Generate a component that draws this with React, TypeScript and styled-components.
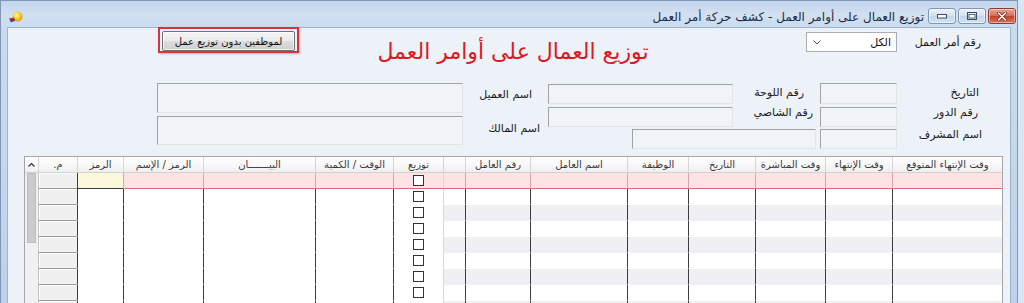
import React from "react";
import styled, { createGlobalStyle } from "styled-components";

const FONT = `"DejaVu Sans", "Liberation Sans", sans-serif`;

const GlobalStyle = createGlobalStyle`
  html, body { margin: 0; padding: 0; }
  body { background: #d9e6f4; font-family: ${FONT}; }
  * { box-sizing: border-box; }
`;

type ColKind = "rowhead" | "code" | "text" | "check" | "banded";

interface Column {
  title: string;
  width: number;
  kind: ColKind;
  faint?: boolean;
}

const COLUMNS: Column[] = [
  { title: "م.", width: 39, kind: "rowhead" },
  { title: "الرمز", width: 46, kind: "code" },
  { title: "الرمز / الإسم", width: 80, kind: "text" },
  { title: "البيـــــــان", width: 112, kind: "text" },
  { title: "الوقت / الكمية", width: 78, kind: "text" },
  { title: "توزيع", width: 50, kind: "check" },
  { title: "", width: 22, kind: "banded", faint: true },
  { title: "رقم العامل", width: 65, kind: "banded" },
  { title: "اسم العامل", width: 97, kind: "banded" },
  { title: "الوظيفة", width: 61, kind: "banded" },
  { title: "التاريخ", width: 67, kind: "banded" },
  { title: "وقت المباشرة", width: 70, kind: "banded" },
  { title: "وقت الإنتهاء", width: 67, kind: "banded" },
  { title: "وقت الإنتهاء المتوقع", width: 110, kind: "banded" },
];

const ROW_COUNT = 9;

const Screen = styled.div`
  width: 1024px;
  height: 303px;
  overflow: hidden;
  background: #d9e6f4;
`;

const Window = styled.div`
  width: 1018px;
  height: 303px;
  display: flex;
  flex-direction: column;
  border: 1px solid #8098b6;
  border-bottom: none;
  background: linear-gradient(180deg, #c3d6ec 0px, #d2e0f1 14px, #cadbee 26px, #bdd2ea 100%);
`;

const TitleBar = styled.div`
  height: 26px;
  flex-shrink: 0;
  display: flex;
  align-items: flex-start;
  padding: 0 1px 0 7px;
`;

const AppIcon = styled.svg`
  margin-top: 10px;
  flex-shrink: 0;
`;

const Caption = styled.div`
  flex: 1;
  direction: rtl;
  text-align: right;
  padding-top: 8px;
  font-size: 12px;
  line-height: 16px;
  color: #1c2d42;
  white-space: nowrap;
`;

const CaptionButtons = styled.div`
  display: flex;
  gap: 2px;
  margin: 7px 0 0 4px;
`;

const CaptionButton = styled.div<{ $close?: boolean }>`
  width: 28px;
  height: 16px;
  display: flex;
  align-items: center;
  justify-content: center;
  border: 1px solid ${(p) => (p.$close ? "#8a3a2e" : "#7f95b3")};
  border-radius: 3px;
  background: ${(p) =>
    p.$close
      ? "linear-gradient(180deg, #e8a797 0%, #d66a55 50%, #c3412b 51%, #d7735c 100%)"
      : "linear-gradient(180deg, #eef3f9 0%, #d3e0ef 50%, #c2d4ea 51%, #d6e3f1 100%)"};
  box-shadow: inset 0 0 0 1px rgba(255, 255, 255, 0.45);
`;

const Client = styled.div`
  flex: 1;
  min-height: 0;
  margin: 0 6px;
  display: flex;
  flex-direction: column;
  background: #edf2f8;
  border: 1px solid #9db3cd;
  border-bottom: none;
`;

const FormArea = styled.div`
  flex-shrink: 0;
  display: grid;
  grid-template-columns: 149px 306px 85px 84px 101px 73px 10px 4px 77px 113px;
  grid-template-rows: 28px 27px 21px 2px 7px 3px 11px 2px 16px 4px 7px;
`;

const HighlightFrame = styled.div`
  grid-area: 1 / 2 / 2 / 3;
  justify-self: start;
  align-self: start;
  margin: -1px 0 0 1px;
  width: 141px;
  height: 26px;
  padding: 2px 2px 0 2px;
  border: 2px solid #d8323f;
  box-shadow: 1px 1px 2px rgba(0, 0, 0, 0.25);
`;

const PushButton = styled.div`
  height: 20px;
  display: flex;
  align-items: center;
  justify-content: center;
  direction: rtl;
  font-size: 10px;
  color: #111;
  border: 1px solid #707070;
  border-radius: 2px;
  background: linear-gradient(180deg, #f4f4f4 0%, #ebebeb 50%, #dddddd 51%, #cfcfcf 100%);
  box-shadow: inset 0 0 0 1px rgba(255, 255, 255, 0.7);
`;

const Heading = styled.h1`
  grid-area: 1 / 1 / 3 / 11;
  justify-self: center;
  align-self: start;
  margin: 9px 0 0;
  padding-left: 8px;
  direction: rtl;
  font-family: ${FONT};
  font-weight: normal;
  font-size: 22px;
  line-height: 30px;
  color: #e0161f;
  white-space: nowrap;
`;

const Combo = styled.div`
  grid-area: 1 / 7 / 2 / 10;
  align-self: start;
  margin-top: 4px;
  height: 20px;
  display: flex;
  align-items: center;
  justify-content: space-between;
  direction: rtl;
  padding: 0 5px 0 6px;
  background: #fff;
  border: 1px solid #abadb3;
  font-size: 11px;
  color: #111;
`;

const FieldLabel = styled.span<{ $area: string; $top: number; $right: number }>`
  grid-area: ${(p) => p.$area};
  align-self: start;
  justify-self: end;
  margin-top: ${(p) => p.$top}px;
  margin-right: ${(p) => p.$right}px;
  direction: rtl;
  font-size: 11px;
  line-height: 16px;
  color: #1a1a1a;
  white-space: nowrap;
`;

const TextBox = styled.div<{ $area: string; $top?: number }>`
  grid-area: ${(p) => p.$area};
  margin-top: ${(p) => p.$top ?? 0}px;
  background: #f0f4f9;
  border-top: 1px solid #a2a2a2;
  border-left: 1px solid #a2a2a2;
  border-right: 1px solid #e4e4e4;
  border-bottom: 1px solid #e4e4e4;
`;

const GridFrame = styled.div`
  flex: 1;
  min-height: 0;
  margin: 0 7px 0 16px;
  overflow: hidden;
  display: grid;
  grid-template-columns: 13px ${COLUMNS.map((c) => `${c.width}px`).join(" ")};
  grid-auto-rows: 16px;
  background: #fff;
  border: 1px solid #a5a5a5;
  border-bottom: none;
`;

const HeaderCell = styled.div<{ $edge?: boolean }>`
  display: flex;
  align-items: center;
  justify-content: center;
  direction: rtl;
  font-size: 10px;
  color: #3a3a3a;
  white-space: nowrap;
  overflow: hidden;
  background: linear-gradient(180deg, #ffffff 0%, #f7f7f7 60%, #eeeeee 100%);
  border-left: ${(p) => (p.$edge ? "none" : "1px solid #d6d6d6")};
  border-bottom: 1px solid #d2d2d2;
`;

const ScrollTrack = styled.div`
  grid-column: 1;
  grid-row: 2 / span ${ROW_COUNT};
  background: #f1f1f1;
  padding-left: 2px;
`;

const ScrollThumb = styled.div`
  width: 9px;
  height: 70px;
  background: #cbcbcb;
  border: 1px solid #bdbdbd;
`;

const RowHeadCell = styled.div`
  background: #f0f0f0;
  border-left: 1px solid #c4c4c4;
  border-bottom: 1px solid #9c9c9c;
  box-shadow: inset 1px 1px 0 #ffffff;
`;

const BodyCell = styled.div<{ $bg: string; $line: string; $under: string }>`
  display: flex;
  align-items: center;
  justify-content: center;
  background: ${(p) => p.$bg};
  border-left: 1px solid ${(p) => p.$line};
  border-bottom: 1px solid ${(p) => p.$under};
`;

const CheckBox = styled.div`
  width: 11px;
  height: 11px;
  margin-left: -1px;
  background: #fff;
  border: 1px solid #333;
`;

const cellLook = (col: Column, row: number) => {
  const selected = row === 0;
  if (selected) {
    if (col.kind === "code") return { bg: "#fbf8dc", line: "#3c3c3c", under: "#3c3c3c" };
    return { bg: "#fde3e3", line: col.faint ? "#f0cfd2" : "#d9a3ab", under: "#e0687a" };
  }
  const bg = col.kind === "banded" && row % 2 === 0 ? "#eef0f4" : "#ffffff";
  return { bg, line: col.faint ? "#d8d8d8" : "#3c3c3c", under: bg };
};

const TitleIcon = () => (
  <AppIcon width="15" height="12" viewBox="0 0 15 12">
    <defs>
      <radialGradient id="sun" cx="0.4" cy="0.35" r="0.7">
        <stop offset="0" stopColor="#fff6a8" />
        <stop offset="0.6" stopColor="#f5c61c" />
        <stop offset="1" stopColor="#d98a0b" />
      </radialGradient>
    </defs>
    <circle cx="9.5" cy="5.5" r="5" fill="url(#sun)" />
    <path d="M1 7.5 L6 6.5 L7 9 L2.5 10.5 Z" fill="#a8323c" />
    <path d="M2 9.5 L6.5 8.5 L6.8 10 L3 11.2 Z" fill="#4a3a8c" />
  </AppIcon>
);

const MinimizeGlyph = () => (
  <svg width="10" height="5" viewBox="0 0 10 5">
    <rect x="0.5" y="0.5" width="9" height="3.5" fill="#fff" stroke="#3c4e66" />
  </svg>
);

const MaximizeGlyph = () => (
  <svg width="10" height="8" viewBox="0 0 10 8">
    <rect x="0.5" y="0.5" width="9" height="7" fill="none" stroke="#3c4e66" />
    <rect x="2" y="2.5" width="6" height="3.5" fill="#fff" stroke="#3c4e66" strokeWidth="0.8" />
  </svg>
);

const CloseGlyph = () => (
  <svg width="10" height="9" viewBox="0 0 10 9">
    <path d="M1.5 1 L8.5 8 M8.5 1 L1.5 8" stroke="#7a2418" strokeWidth="3" strokeLinecap="round" />
    <path d="M1.5 1 L8.5 8 M8.5 1 L1.5 8" stroke="#fff" strokeWidth="1.6" strokeLinecap="round" />
  </svg>
);

const ChevronDown = () => (
  <svg width="8" height="5" viewBox="0 0 8 5">
    <path d="M0.5 0.5 L4 4 L7.5 0.5" fill="none" stroke="#555" strokeWidth="1" />
  </svg>
);

const ChevronUp = () => (
  <svg width="7" height="4" viewBox="0 0 7 4">
    <path d="M0.5 3.5 L3.5 0.5 L6.5 3.5" fill="none" stroke="#333" strokeWidth="1.2" />
  </svg>
);

const App: React.FC = () => (
  <Screen>
    <GlobalStyle />
    <Window>
      <TitleBar>
        <TitleIcon />
        <Caption>توزيع العمال على أوامر العمل - كشف حركة أمر العمل</Caption>
        <CaptionButtons>
          <CaptionButton>
            <MinimizeGlyph />
          </CaptionButton>
          <CaptionButton>
            <MaximizeGlyph />
          </CaptionButton>
          <CaptionButton $close>
            <CloseGlyph />
          </CaptionButton>
        </CaptionButtons>
      </TitleBar>

      <Client>
        <FormArea>
          <HighlightFrame>
            <PushButton>لموظفين بدون توزيع عمل</PushButton>
          </HighlightFrame>
          <Heading>توزيع العمال على أوامر العمل</Heading>
          <Combo>
            <span>الكل</span>
            <ChevronDown />
          </Combo>
          <FieldLabel $area="1 / 10 / 2 / 11" $top={7} $right={29}>
            رقم أمر العمل
          </FieldLabel>

          <FieldLabel $area="3 / 10 / 4 / 11" $top={2} $right={31}>
            التاريخ
          </FieldLabel>
          <TextBox $area="3 / 9 / 4 / 10" />
          <FieldLabel $area="3 / 6 / 4 / 9" $top={2} $right={16}>
            رقم اللوحة
          </FieldLabel>
          <TextBox $area="3 / 4 / 4 / 6" $top={1} />
          <FieldLabel $area="3 / 3 / 4 / 4" $top={4} $right={16}>
            اسم العميل
          </FieldLabel>
          <TextBox $area="3 / 2 / 6 / 3" />

          <FieldLabel $area="5 / 10 / 6 / 11" $top={-1} $right={32}>
            رقم الدور
          </FieldLabel>
          <TextBox $area="5 / 9 / 8 / 10" $top={1} />
          <FieldLabel $area="5 / 6 / 6 / 9" $top={-1} $right={7}>
            رقم الشاصي
          </FieldLabel>
          <TextBox $area="5 / 4 / 8 / 6" $top={1} />
          <TextBox $area="7 / 2 / 10 / 3" />
          <FieldLabel $area="7 / 3 / 8 / 4" $top={5} $right={8}>
            اسم المالك
          </FieldLabel>

          <FieldLabel $area="8 / 10 / 9 / 11" $top={0} $right={28}>
            اسم المشرف
          </FieldLabel>
          <TextBox $area="9 / 9 / 11 / 10" />
          <TextBox $area="9 / 5 / 11 / 8" />
        </FormArea>

        <GridFrame>
          <HeaderCell $edge>
            <ChevronUp />
          </HeaderCell>
          {COLUMNS.map((col, i) => (
            <HeaderCell key={`h${i}`}>{col.title}</HeaderCell>
          ))}
          <ScrollTrack>
            <ScrollThumb />
          </ScrollTrack>
          {Array.from({ length: ROW_COUNT }).map((_, row) =>
            COLUMNS.map((col, i) => {
              if (col.kind === "rowhead") return <RowHeadCell key={`r${row}-${i}`} />;
              const look = cellLook(col, row);
              return (
                <BodyCell key={`r${row}-${i}`} $bg={look.bg} $line={look.line} $under={look.under}>
                  {col.kind === "check" && <CheckBox />}
                </BodyCell>
              );
            })
          )}
        </GridFrame>
      </Client>
    </Window>
  </Screen>
);

export default App;
